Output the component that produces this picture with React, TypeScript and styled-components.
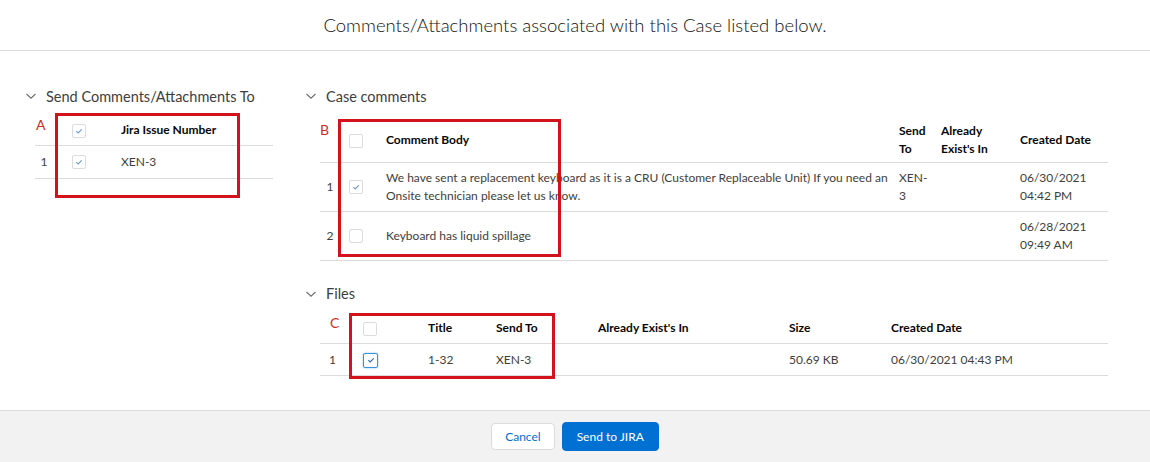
import React from 'react';
import styled, { createGlobalStyle } from 'styled-components';

const GlobalStyle = createGlobalStyle`
  html, body {
    margin: 0;
    padding: 0;
    background: #fff;
  }
  body {
    font-family: Lato, "Liberation Sans", Arial, sans-serif;
    font-size: 12px;
    color: #3e3e3c;
  }
`;

const Page = styled.div`
  display: flex;
  flex-direction: column;
  height: 462px;
`;

const Header = styled.header`
  height: 50px;
  border-bottom: 1px solid #dddbda;
  display: flex;
  align-items: center;
  justify-content: center;
`;

const Title = styled.h1`
  margin: 0;
  font-size: 18.5px;
  font-weight: 300;
  color: #101010;
`;

const Main = styled.main`
  flex: 1;
  display: grid;
  grid-template-columns: 255px 1fr;
  column-gap: 25px;
  align-items: start;
  padding: 35px 42px 0 25px;
`;

const Column = styled.section`
  display: flex;
  flex-direction: column;
`;

const SectionTitle = styled.div<{ $mt?: number }>`
  display: flex;
  align-items: center;
  gap: 9px;
  height: 20px;
  margin-top: ${p => p.$mt ?? 0}px;
  font-size: 14.5px;
  color: #3e3e3c;
`;

const TableWrap = styled.div<{ $ml: number; $mt: number; $mr?: number }>`
  position: relative;
  margin: ${p => p.$mt}px ${p => p.$mr ?? 0}px 0 ${p => p.$ml}px;
`;

const Table = styled.table`
  width: 100%;
  border-collapse: collapse;
  table-layout: fixed;
`;

const Col = styled.col<{ $w?: number }>`
  ${p => (p.$w ? `width: ${p.$w}px;` : '')}
`;

const Tr = styled.tr<{ $h: number }>`
  height: ${p => p.$h}px;
  border-bottom: 1px solid #dddbda;
`;

const Th = styled.th<{ $pl?: number }>`
  padding: 0 8px 0 ${p => p.$pl ?? 8}px;
  text-align: left;
  vertical-align: middle;
  font-size: 12px;
  line-height: 18px;
  font-weight: 700;
  color: #080707;
`;

const Td = styled.td<{ $pl?: number; $pr?: number }>`
  padding: 0 ${p => p.$pr ?? 8}px 0 ${p => p.$pl ?? 8}px;
  text-align: left;
  vertical-align: middle;
  font-size: 12px;
  line-height: 18px;
  color: #3e3e3c;
`;

const NumTd = styled.td`
  padding: 0;
  text-align: center;
  vertical-align: middle;
  line-height: 18px;
  color: #3e3e3c;
`;

const MarkerTh = styled.th<{ $pl: number; $pt: number }>`
  padding: ${p => p.$pt}px 0 0 ${p => p.$pl}px;
  text-align: left;
  vertical-align: top;
  font-weight: 400;
  line-height: 14px;
`;

const Marker = styled.span`
  color: #d42a20;
  font-size: 14px;
`;

const Callout = styled.div<{ $top: number; $left: number; $w: number; $h: number }>`
  position: absolute;
  top: ${p => p.$top}px;
  left: ${p => p.$left}px;
  width: ${p => p.$w}px;
  height: ${p => p.$h}px;
  border: 3px solid #d3131b;
  box-sizing: border-box;
  pointer-events: none;
`;

const Box = styled.span<{ $focus?: boolean }>`
  display: inline-flex;
  align-items: center;
  justify-content: center;
  width: ${p => (p.$focus ? 15 : 14)}px;
  height: ${p => (p.$focus ? 15 : 14)}px;
  box-sizing: border-box;
  border: 1px solid ${p => (p.$focus ? '#3f8fd8' : '#dcdcdc')};
  border-radius: 2px;
  background: #fff;
  vertical-align: middle;
  ${p => (p.$focus ? 'box-shadow: 0 0 2px rgba(27, 150, 255, 0.6);' : '')}
`;

const Footer = styled.footer`
  height: 51px;
  border-top: 1px solid #dddbda;
  background: #f3f2f2;
  display: flex;
  align-items: center;
  justify-content: center;
  gap: 7px;
`;

const Button = styled.button<{ $primary?: boolean }>`
  height: ${p => (p.$primary ? 29 : 27)}px;
  padding: 0 ${p => (p.$primary ? 14 : 13)}px;
  border-radius: 4px;
  border: 1px solid ${p => (p.$primary ? '#0070d2' : '#dddbda')};
  background: ${p => (p.$primary ? '#0070d2' : '#fff')};
  color: ${p => (p.$primary ? '#fff' : '#0070d2')};
  font-family: inherit;
  font-size: 12px;
  cursor: pointer;
`;

const Chevron = () => (
  <svg width="12" height="12" viewBox="0 0 12 12">
    <path d="M1.5 4 L6 8.2 L10.5 4" fill="none" stroke="#706e6b" strokeWidth="1.1" />
  </svg>
);

const Checkbox: React.FC<{ checked?: boolean; focus?: boolean }> = ({ checked, focus }) => (
  <Box $focus={focus}>
    {checked && (
      <svg width="10" height="10" viewBox="0 0 10 10">
        <polyline
          points="2.3,5.2 4.2,6.9 7.7,3.4"
          fill="none"
          stroke={focus ? '#2a6cb8' : '#6f9ad0'}
          strokeWidth="1.1"
        />
      </svg>
    )}
  </Box>
);

const comments = [
  {
    body: 'We have sent a replacement keyboard as it is a CRU (Customer Replaceable Unit) If you need an Onsite technician please let us know.',
    sendTo: 'XEN-3',
    created: '06/30/2021 04:42 PM',
    checked: true,
  },
  {
    body: 'Keyboard has liquid spillage',
    sendTo: '',
    created: '06/28/2021 09:49 AM',
    checked: false,
  },
];

const App: React.FC = () => {
  return (
    <Page>
      <GlobalStyle />
      <Header>
        <Title>Comments/Attachments associated with this Case listed below.</Title>
      </Header>

      <Main>
        <Column>
          <SectionTitle>
            <Chevron />
            Send Comments/Attachments To
          </SectionTitle>
          <TableWrap $ml={10} $mt={9} $mr={7}>
            <Table>
              <colgroup>
                <Col $w={18} />
                <Col $w={60} />
                <Col />
              </colgroup>
              <thead>
                <Tr $h={30}>
                  <MarkerTh $pl={1} $pt={3}>
                    <Marker>A</Marker>
                  </MarkerTh>
                  <Th $pl={19}>
                    <Checkbox checked />
                  </Th>
                  <Th>Jira Issue Number</Th>
                </Tr>
              </thead>
              <tbody>
                <Tr $h={33}>
                  <NumTd>1</NumTd>
                  <Td $pl={19}>
                    <Checkbox checked />
                  </Td>
                  <Td>XEN-3</Td>
                </Tr>
              </tbody>
            </Table>
            <Callout $top={-2} $left={20} $w={185} $h={85} />
          </TableWrap>
        </Column>

        <Column>
          <SectionTitle>
            <Chevron />
            Case comments
          </SectionTitle>
          <TableWrap $ml={15} $mt={12}>
            <Table>
              <colgroup>
                <Col $w={20} />
                <Col $w={38} />
                <Col />
                <Col $w={42} />
                <Col $w={79} />
                <Col $w={96} />
              </colgroup>
              <thead>
                <Tr $h={44}>
                  <MarkerTh $pl={0} $pt={5}>
                    <Marker>B</Marker>
                  </MarkerTh>
                  <Th $pl={9}>
                    <Checkbox />
                  </Th>
                  <Th>Comment Body</Th>
                  <Th>Send To</Th>
                  <Th>Already Exist's In</Th>
                  <Th>Created Date</Th>
                </Tr>
              </thead>
              <tbody>
                {comments.map((c, i) => (
                  <Tr $h={49} key={i}>
                    <NumTd>{i + 1}</NumTd>
                    <Td $pl={9}>
                      <Checkbox checked={c.checked} />
                    </Td>
                    <Td $pr={0}>{c.body}</Td>
                    <Td>{c.sendTo}</Td>
                    <Td />
                    <Td>{c.created}</Td>
                  </Tr>
                ))}
              </tbody>
            </Table>
            <Callout $top={1} $left={18} $w={223} $h={138} />
          </TableWrap>

          <SectionTitle $mt={23}>
            <Chevron />
            Files
          </SectionTitle>
          <TableWrap $ml={15} $mt={9}>
            <Table>
              <colgroup>
                <Col $w={25} />
                <Col $w={75} />
                <Col $w={68} />
                <Col $w={102} />
                <Col $w={191} />
                <Col $w={102} />
                <Col />
              </colgroup>
              <thead>
                <Tr $h={31}>
                  <MarkerTh $pl={10} $pt={3}>
                    <Marker>C</Marker>
                  </MarkerTh>
                  <Th $pl={18}>
                    <Checkbox />
                  </Th>
                  <Th>Title</Th>
                  <Th>Send To</Th>
                  <Th>Already Exist's In</Th>
                  <Th>Size</Th>
                  <Th>Created Date</Th>
                </Tr>
              </thead>
              <tbody>
                <Tr $h={32}>
                  <NumTd>1</NumTd>
                  <Td $pl={18}>
                    <Checkbox checked focus />
                  </Td>
                  <Td>1-32</Td>
                  <Td>XEN-3</Td>
                  <Td />
                  <Td>50.69 KB</Td>
                  <Td>06/30/2021 04:43 PM</Td>
                </Tr>
              </tbody>
            </Table>
            <Callout $top={0} $left={29} $w={206} $h={66} />
          </TableWrap>
        </Column>
      </Main>

      <Footer>
        <Button>Cancel</Button>
        <Button $primary>Send to JIRA</Button>
      </Footer>
    </Page>
  );
};

export default App;
